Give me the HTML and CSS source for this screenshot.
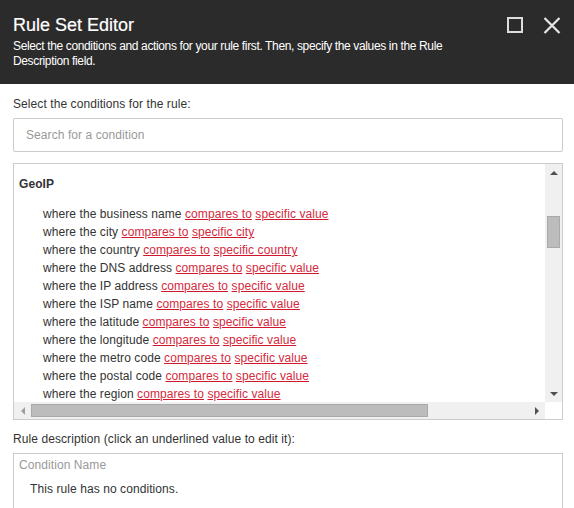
FILE: index.html
```html
<!DOCTYPE html>
<html>
<head>
<meta charset="utf-8">
<link rel="stylesheet" href="styles.css">
</head>
<body>
<div class="dialog">
  <header class="header">
    <div class="header-text">
      <h1 class="title">Rule Set Editor</h1>
      <p class="subtitle">Select the conditions and actions for your rule first. Then, specify the values in the Rule Description field.</p>
    </div>
    <div class="header-icons">
      <svg class="icon" width="17" height="17" viewBox="0 0 17 17"><rect x="1" y="1" width="14" height="14" fill="none" stroke="#dcdcdc" stroke-width="2"/></svg>
      <svg class="icon" width="18" height="17" viewBox="0 0 18 17"><path d="M1.5 1 L16.5 16 M16.5 1 L1.5 16" stroke="#e6e6e6" stroke-width="2.2" fill="none"/></svg>
    </div>
  </header>
  <main class="content">
    <div class="label label-first">Select the conditions for the rule:</div>
    <div class="search">Search for a condition</div>
    <div class="tree">
      <div class="tree-view">
        <div class="group">GeoIP</div>
        <ul class="items">
          <li>where the business name <a>compares to</a> <a>specific value</a></li>
          <li>where the city <a>compares to</a> <a>specific city</a></li>
          <li>where the country <a>compares to</a> <a>specific country</a></li>
          <li>where the DNS address <a>compares to</a> <a>specific value</a></li>
          <li>where the IP address <a>compares to</a> <a>specific value</a></li>
          <li>where the ISP name <a>compares to</a> <a>specific value</a></li>
          <li>where the latitude <a>compares to</a> <a>specific value</a></li>
          <li>where the longitude <a>compares to</a> <a>specific value</a></li>
          <li>where the metro code <a>compares to</a> <a>specific value</a></li>
          <li>where the postal code <a>compares to</a> <a>specific value</a></li>
          <li>where the region <a>compares to</a> <a>specific value</a></li>
        </ul>
      </div>
      <div class="vbar">
        <div class="arrow-box"><span class="tri tri-up"></span></div>
        <div class="vtrack"><div class="vthumb"></div></div>
        <div class="arrow-box"><span class="tri tri-down"></span></div>
      </div>
      <div class="hbar">
        <div class="harrow"><span class="tri tri-left"></span></div>
        <div class="htrack"><div class="hthumb"></div></div>
        <div class="harrow"><span class="tri tri-right"></span></div>
      </div>
      <div class="corner"></div>
    </div>
    <div class="label label-desc">Rule description (click an underlined value to edit it):</div>
    <div class="desc">
      <div class="desc-title">Condition Name</div>
      <div class="desc-text">This rule has no conditions.</div>
    </div>
  </main>
</div>
</body>
</html>
```
FILE: styles.css
```css
html, body {
  margin: 0;
  padding: 0;
  background: #ffffff;
  overflow: hidden;
}
body {
  font-family: "Liberation Sans", Arial, sans-serif;
  font-size: 12px;
  color: #333333;
  width: 574px;
  height: 508px;
}
.header {
  background: #2b2b2b;
  height: 84px;
  box-sizing: border-box;
  padding: 14px 13px 0 13px;
  display: flex;
  justify-content: space-between;
  align-items: flex-start;
}
.header-text {
  width: 450px;
}
.title {
  margin: 0;
  font-size: 18px;
  font-weight: normal;
  line-height: 22px;
  color: #ffffff;
  -webkit-text-stroke: 0.2px #ffffff;
}
.subtitle {
  margin: 3px 0 0 0;
  font-size: 12px;
  line-height: 15px;
  color: #ffffff;
  letter-spacing: -0.36px;
}
.header-icons {
  display: flex;
  gap: 19px;
  padding-top: 3px;
}
.icon {
  display: block;
}
.content {
  padding: 0 11px 0 13px;
  letter-spacing: 0.08px;
}
.label {
  line-height: 16px;
}
.label-first {
  padding-top: 12px;
}
.search {
  margin-top: 6px;
  height: 34px;
  box-sizing: border-box;
  border: 1px solid #cccccc;
  border-radius: 2px;
  padding: 0 12px;
  line-height: 32px;
  color: #999999;
}
.tree {
  margin-top: 11px;
  height: 257px;
  box-sizing: border-box;
  border: 1px solid #cccccc;
  display: grid;
  grid-template-columns: 1fr 17px;
  grid-template-rows: 1fr 17px;
}
.tree-view {
  overflow: hidden;
  padding: 12px 0 0 5px;
}
.group {
  font-weight: bold;
  line-height: 16px;
}
.items {
  list-style: none;
  margin: 13px 0 0 0;
  padding: 0 0 0 24px;
  white-space: nowrap;
}
.items li {
  line-height: 18px;
}
.items a {
  color: #d42a3d;
  text-decoration: underline;
  text-decoration-color: #d0182c;
  cursor: pointer;
}
.vbar {
  background: #f0f0f0;
  display: flex;
  flex-direction: column;
}
.arrow-box {
  height: 17px;
  display: flex;
  align-items: center;
  justify-content: center;
}
.vtrack {
  flex: 1;
  padding: 35px 2px 0 2px;
}
.vthumb {
  height: 32px;
  background: #bcbcbc;
  border: 1px solid #a9a9a9;
  box-sizing: border-box;
}
.hbar {
  background: #f0f0f0;
  display: flex;
  align-items: center;
}
.harrow {
  width: 17px;
  height: 17px;
  display: flex;
  align-items: center;
  justify-content: center;
}
.htrack {
  flex: 1;
  padding: 0 100px 0 0;
}
.hthumb {
  height: 13px;
  background: #bcbcbc;
  border: 1px solid #a9a9a9;
  box-sizing: border-box;
}
.corner {
  background: #ffffff;
}
.tri {
  display: block;
  width: 0;
  height: 0;
}
.tri-up {
  border-left: 4px solid transparent;
  border-right: 4px solid transparent;
  border-bottom: 4px solid #505050;
}
.tri-down {
  border-left: 4px solid transparent;
  border-right: 4px solid transparent;
  border-top: 4px solid #505050;
}
.tri-left {
  border-top: 4px solid transparent;
  border-bottom: 4px solid transparent;
  border-right: 4px solid #a0a0a0;
}
.tri-right {
  border-top: 4px solid transparent;
  border-bottom: 4px solid transparent;
  border-left: 4px solid #505050;
}
.label-desc {
  margin-top: 11px;
}
.desc {
  margin-top: 6px;
  border: 1px solid #cccccc;
  border-bottom: none;
  height: 60px;
  padding: 3px 5px 0 5px;
}
.desc-title {
  color: #999999;
  line-height: 16px;
}
.desc-text {
  margin-top: 8px;
  padding-left: 11px;
  line-height: 16px;
}
```
